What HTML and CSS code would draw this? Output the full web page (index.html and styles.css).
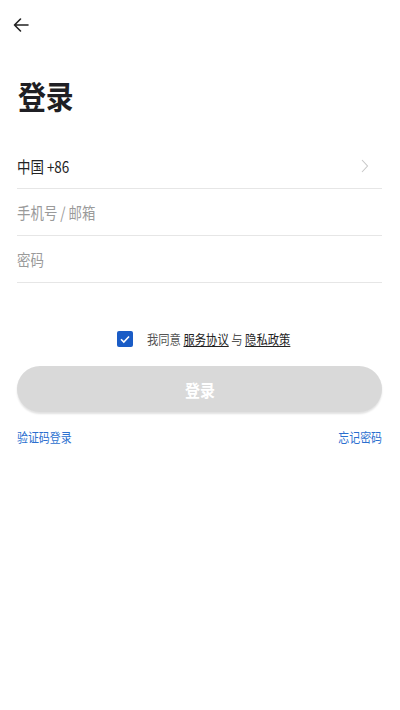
FILE: index.html
```html
<!DOCTYPE html>
<html lang="zh">
<head>
<meta charset="utf-8">
<link rel="stylesheet" href="styles.css">
</head>
<body>
<div class="page">
  <div class="topbar">
    <svg class="back" width="18" height="18" viewBox="0 0 18 18"><path d="M16 9H2.5M8.5 3L2.5 9l6 6" fill="none" stroke="#222" stroke-width="1.6" stroke-linecap="round" stroke-linejoin="round"/></svg>
  </div>
  <h1 class="title"><span class="sx">登录</span></h1>
  <div class="form">
    <div class="row">
      <span class="value sx">中国 +86</span>
      <svg class="chev" width="8" height="14" viewBox="0 0 8 14"><path d="M1 1l5.5 6L1 13" fill="none" stroke="#c8c8c8" stroke-width="1.1"/></svg>
    </div>
    <div class="row"><span class="ph sx">手机号 / 邮箱</span></div>
    <div class="row"><span class="ph sx">密码</span></div>
  </div>
  <div class="agree">
    <div class="agree-inner">
      <span class="check"><svg width="16" height="16" viewBox="0 0 16 16"><path d="M4 8.2l2.8 2.8L12 5.5" fill="none" stroke="#fff" stroke-width="1.6"/></svg></span>
      <span class="agree-text">我同意 <u>服务协议</u> 与 <u>隐私政策</u></span>
    </div>
  </div>
  <div class="btn"><span class="btn-text">登录</span></div>
  <div class="links">
    <span class="link sx">验证码登录</span>
    <span class="link sx right">忘记密码</span>
  </div>
</div>
</body>
</html>
```
FILE: styles.css
```css
* { box-sizing: border-box; }
html, body { margin: 0; padding: 0; background: #fff; }
body { font-family: "Noto Sans CJK SC", "Noto Sans", sans-serif; color: #222; }
.page { width: 400px; height: 710px; padding: 0 18px 0 17px; }
.sx { display: inline-block; transform: scaleX(0.84); transform-origin: left center; }
.sx.right { transform-origin: right center; }
.topbar { height: 50px; display: flex; align-items: center; }
.back { margin-left: -5px; }
.title { margin: 23px 0 0 1px; font-size: 32px; font-weight: 700; line-height: 44px; color: #1f1f24; }
.title .sx { transform: scaleX(0.87); }
.form { margin-top: 24px; }
.row { height: 47px; border-bottom: 1px solid #e6e6e6; display: flex; align-items: center; justify-content: space-between; }
.row:first-child { height: 48px; padding-top: 2px; }
.value { font-size: 16px; color: #222; }
.ph { font-size: 16px; color: #9a9a9a; }
.chev { margin-right: 13px; }
.agree { margin-top: 46px; display: flex; justify-content: center; padding-left: 8px; }
.agree-inner { display: flex; align-items: center; gap: 14px; }
.check { width: 16px; height: 16px; background: #1a5cc6; border-radius: 2px; display: flex; }
.agree-text { font-size: 13px; color: #555; display: inline-block; transform: scaleX(0.87); transform-origin: left center; margin-right: -21px; }
.agree-text u { color: #222; text-underline-offset: 2px; }
.btn { margin-top: 18px; height: 46px; border-radius: 23px; background: #d9d9d9; color: #fff; font-size: 17px; font-weight: 700; display: flex; align-items: center; justify-content: center; box-shadow: 0 2px 2px rgba(0,0,0,0.12); }
.btn-text { display: inline-block; transform: scaleX(0.88); }
.links { margin-top: 15px; display: flex; justify-content: space-between; }
.link { font-size: 13px; color: #2b6fcf; }
```
